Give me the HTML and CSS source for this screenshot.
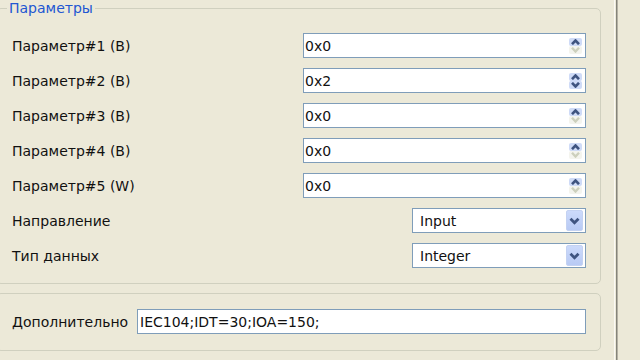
FILE: index.html
```html
<!DOCTYPE html>
<html lang="ru">
<head>
<meta charset="utf-8">
<title>Параметры</title>
<link rel="stylesheet" href="styles.css">
</head>
<body>
<div class="screen">
  <div class="main">
    <fieldset class="group params">
      <legend class="group-title">Параметры</legend>
      <div class="rows">
        <div class="row">
          <span class="label">Параметр#1 (В)</span>
          <div class="field spin">
            <span class="val">0x0</span>
            <div class="spin-btns">
              <span class="sb on"><svg width="9" height="6" viewBox="0 0 9 6"><path d="M1 5.2 L4.5 1.5 L8 5.2" fill="none" stroke="#3f5480" stroke-width="2.6"/></svg></span>
              <span class="sb off"><svg width="9" height="6" viewBox="0 0 9 6"><path d="M1 0.8 L4.5 4.5 L8 0.8" fill="none" stroke="#cdd0bd" stroke-width="2.4"/></svg></span>
            </div>
          </div>
        </div>
        <div class="row">
          <span class="label">Параметр#2 (В)</span>
          <div class="field spin">
            <span class="val">0x2</span>
            <div class="spin-btns">
              <span class="sb on"><svg width="9" height="6" viewBox="0 0 9 6"><path d="M1 5.2 L4.5 1.5 L8 5.2" fill="none" stroke="#3f5480" stroke-width="2.6"/></svg></span>
              <span class="sb on"><svg width="9" height="6" viewBox="0 0 9 6"><path d="M1 0.8 L4.5 4.5 L8 0.8" fill="none" stroke="#3f5480" stroke-width="2.6"/></svg></span>
            </div>
          </div>
        </div>
        <div class="row">
          <span class="label">Параметр#3 (В)</span>
          <div class="field spin">
            <span class="val">0x0</span>
            <div class="spin-btns">
              <span class="sb on"><svg width="9" height="6" viewBox="0 0 9 6"><path d="M1 5.2 L4.5 1.5 L8 5.2" fill="none" stroke="#3f5480" stroke-width="2.6"/></svg></span>
              <span class="sb off"><svg width="9" height="6" viewBox="0 0 9 6"><path d="M1 0.8 L4.5 4.5 L8 0.8" fill="none" stroke="#cdd0bd" stroke-width="2.4"/></svg></span>
            </div>
          </div>
        </div>
        <div class="row">
          <span class="label">Параметр#4 (В)</span>
          <div class="field spin">
            <span class="val">0x0</span>
            <div class="spin-btns">
              <span class="sb on"><svg width="9" height="6" viewBox="0 0 9 6"><path d="M1 5.2 L4.5 1.5 L8 5.2" fill="none" stroke="#3f5480" stroke-width="2.6"/></svg></span>
              <span class="sb off"><svg width="9" height="6" viewBox="0 0 9 6"><path d="M1 0.8 L4.5 4.5 L8 0.8" fill="none" stroke="#cdd0bd" stroke-width="2.4"/></svg></span>
            </div>
          </div>
        </div>
        <div class="row">
          <span class="label">Параметр#5 (W)</span>
          <div class="field spin">
            <span class="val">0x0</span>
            <div class="spin-btns">
              <span class="sb on"><svg width="9" height="6" viewBox="0 0 9 6"><path d="M1 5.2 L4.5 1.5 L8 5.2" fill="none" stroke="#3f5480" stroke-width="2.6"/></svg></span>
              <span class="sb off"><svg width="9" height="6" viewBox="0 0 9 6"><path d="M1 0.8 L4.5 4.5 L8 0.8" fill="none" stroke="#cdd0bd" stroke-width="2.4"/></svg></span>
            </div>
          </div>
        </div>
        <div class="row">
          <span class="label">Направление</span>
          <div class="field combo">
            <span class="val">Input</span>
            <span class="cbtn"><svg width="11" height="8" viewBox="0 0 11 8"><path d="M1.5 1.8 L5.5 5.8 L9.5 1.8" fill="none" stroke="#3f5480" stroke-width="2.8"/></svg></span>
          </div>
        </div>
        <div class="row">
          <span class="label">Тип данных</span>
          <div class="field combo">
            <span class="val">Integer</span>
            <span class="cbtn"><svg width="11" height="8" viewBox="0 0 11 8"><path d="M1.5 1.8 L5.5 5.8 L9.5 1.8" fill="none" stroke="#3f5480" stroke-width="2.8"/></svg></span>
          </div>
        </div>
      </div>
    </fieldset>
    <div class="group extra">
      <span class="label extra-label">Дополнительно</span>
      <div class="field text"><span class="val">IEC104;IDT=30;IOA=150;</span></div>
    </div>
  </div>
  <div class="divider"></div>
  <div class="side"></div>
</div>
</body>
</html>
```

FILE: styles.css
```css
* { box-sizing: border-box; }
html, body {
  margin: 0;
  padding: 0;
  background: #ECE9D8;
  overflow: hidden;
}
body {
  font-family: "DejaVu Sans", "Noto Sans", sans-serif;
  font-size: 14px;
  color: #111;
}
.screen {
  display: flex;
  width: 640px;
  height: 360px;
  overflow: hidden;
}
.main {
  width: 614px;
  flex: none;
}
.group {
  margin: 0 13px 0 -4px;
  border: 1px solid #D0D0BF;
  border-radius: 5px;
}
.params {
  padding: 17px 14px 15px 15px;
}
.group-title {
  padding: 0 2px;
  margin-left: -5px;
  line-height: 16px;
  color: #2257D2;
}
.rows {
  display: flex;
  flex-direction: column;
  gap: 10px;
}
.row {
  display: flex;
  align-items: center;
  height: 25px;
}
.label {
  flex: 1;
  line-height: 16px;
}
.field {
  height: 25px;
  border: 1px solid #7F9DB9;
  background: #fff;
  display: flex;
  align-items: center;
}
.val {
  flex: 1;
  padding-left: 1px;
  line-height: 16px;
  white-space: nowrap;
}
.spin {
  width: 283px;
}
.spin-btns {
  display: flex;
  flex-direction: column;
  width: 13px;
  margin-right: 3px;
}
.sb {
  height: 8px;
  display: flex;
  align-items: center;
  justify-content: center;
  border-radius: 2px;
}
.sb.on { background: #CFDBF7; }
.sb.off { background: #F4F4EE; }
.combo {
  width: 174px;
}
.combo .val { padding-left: 7px; }
.cbtn {
  width: 17px;
  height: 21px;
  margin: 1px 2px 1px 0;
  border-radius: 2px;
  background: linear-gradient(#CCDAFB, #B8CAF4);
  border: 1px solid #C4D2F2;
  display: flex;
  align-items: center;
  justify-content: center;
}
.extra {
  margin-top: 9px;
  padding: 15px 14px 16px 15px;
  display: flex;
  align-items: center;
}
.extra-label {
  flex: 1;
}
.text {
  width: 449px;
}
.text .val { padding-left: 2px; }
.divider {
  width: 4px;
  flex: none;
  background: linear-gradient(to right, #FBFAF5 0 1px, #ECE9D8 1px 2px, #85847A 2px 3px, #B5B2A4 3px 4px);
}
.side {
  flex: 1;
  background: #ECE9D8;
}
```
